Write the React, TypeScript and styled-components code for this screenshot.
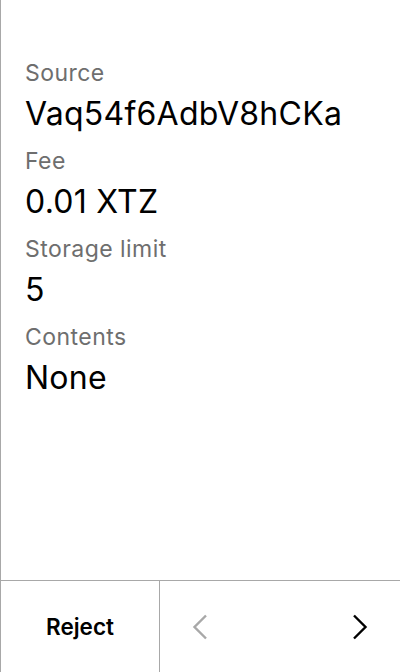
import styled, { createGlobalStyle } from "styled-components";

const GlobalStyle = createGlobalStyle`
  html, body {
    margin: 0;
    padding: 0;
    background: #ffffff;
  }
  body {
    font-family: Inter, "Noto Sans", sans-serif;
    -webkit-font-smoothing: antialiased;
  }
`;

const Screen = styled.div`
  width: 400px;
  height: 672px;
  box-sizing: border-box;
  border-left: 1px solid #a8a8a8;
  display: flex;
  flex-direction: column;
  background: #ffffff;
`;

const Content = styled.div`
  flex: 1;
  display: flex;
  flex-direction: column;
  gap: 17px;
  padding: 59px 24px 0 24px;
`;

const Field = styled.div`
  display: flex;
  flex-direction: column;
  gap: 11px;
`;

const Label = styled.div`
  font-size: 23px;
  line-height: 28px;
  letter-spacing: 0.45px;
  color: #6e6e6e;
`;

const Value = styled.div`
  font-size: 32px;
  line-height: 32px;
  letter-spacing: 0.25px;
  color: #000000;
`;

const Footer = styled.div`
  height: 92px;
  flex-shrink: 0;
  border-top: 1px solid #a8a8a8;
  box-sizing: border-box;
  display: grid;
  grid-template-columns: 159px 1fr;
`;

const RejectButton = styled.div`
  display: flex;
  align-items: center;
  justify-content: center;
  border-right: 1px solid #a8a8a8;
  font-size: 22.5px;
  font-weight: 600;
  color: #000000;
`;

const Nav = styled.div`
  display: flex;
  align-items: center;
  justify-content: space-between;
`;

const NavButton = styled.div<{ $disabled?: boolean }>`
  width: 80px;
  display: flex;
  align-items: center;
  justify-content: center;
  color: ${({ $disabled }) => ($disabled ? "#a8a8a8" : "#000000")};
`;

const Chevron = ({ dir }: { dir: "left" | "right" }) => (
  <svg width="16" height="26" viewBox="0 0 16 26" fill="none">
    <polyline
      points={dir === "left" ? "14,1.5 2.5,13 14,24.5" : "2,1.5 13.5,13 2,24.5"}
      stroke="currentColor"
      strokeWidth="2.4"
    />
  </svg>
);

const fields = [
  { label: "Source", value: "Vaq54f6AdbV8hCKa" },
  { label: "Fee", value: "0.01 XTZ" },
  { label: "Storage limit", value: "5" },
  { label: "Contents", value: "None" },
];

export default function App() {
  return (
    <>
      <GlobalStyle />
      <Screen>
        <Content>
          {fields.map((f) => (
            <Field key={f.label}>
              <Label>{f.label}</Label>
              <Value>{f.value}</Value>
            </Field>
          ))}
        </Content>
        <Footer>
          <RejectButton>Reject</RejectButton>
          <Nav>
            <NavButton $disabled>
              <Chevron dir="left" />
            </NavButton>
            <NavButton>
              <Chevron dir="right" />
            </NavButton>
          </Nav>
        </Footer>
      </Screen>
    </>
  );
}
